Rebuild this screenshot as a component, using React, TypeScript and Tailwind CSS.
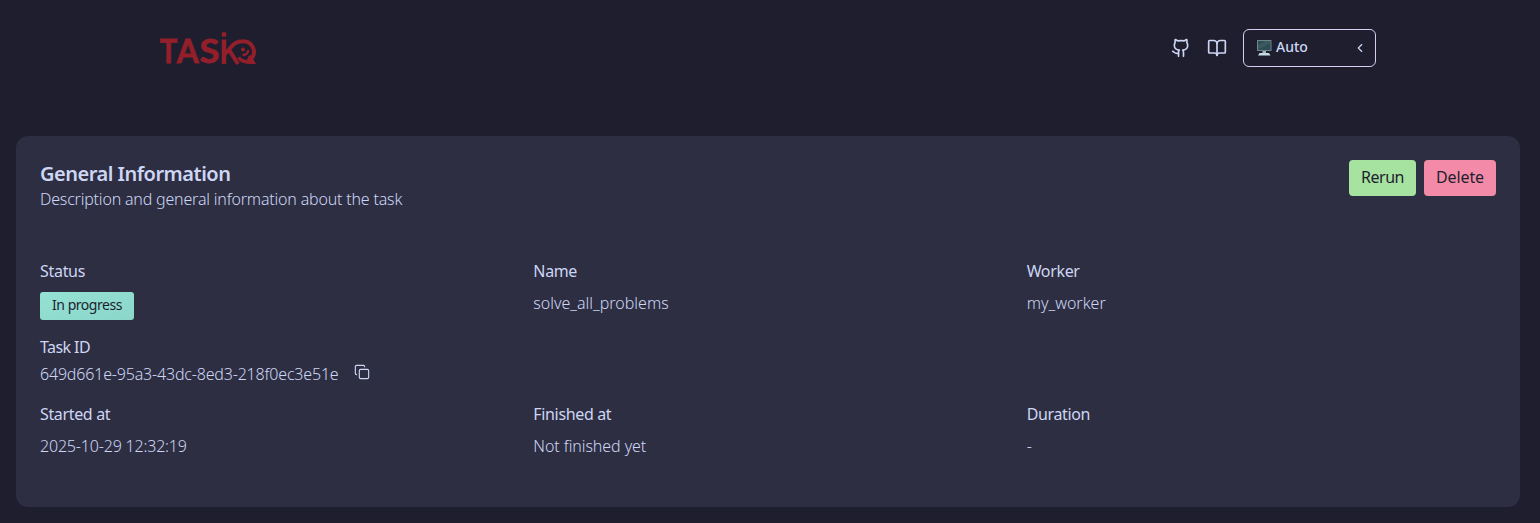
import { BookOpen, ChevronLeft, Copy, Github } from "lucide-react";
import type { ReactNode } from "react";

function Logo() {
  return (
    <svg width="98" height="56" viewBox="0 -10 98 56" className="block" fill="none" stroke="#931f2b">
      <g fill="#931f2b" stroke="#931f2b" strokeWidth="0.8" fontFamily="Lato, sans-serif" fontWeight="700" fontSize="33">
        <text x="0.8" y="33.300" textLength="17.500" lengthAdjust="spacingAndGlyphs">T</text>
        <text x="17.800" y="33.300" textLength="22" lengthAdjust="spacingAndGlyphs">A</text>
        <text x="40.500" y="33.300" textLength="20" lengthAdjust="spacingAndGlyphs">S</text>
      </g>
      <rect x="62.800" y="2.300" width="4.400" height="4.400" fill="#931f2b" stroke="none" />
      <path d="M65 9.500V34" strokeWidth="4.400" />
      <path d="M66 24 74.500 14.500C77.500 11.700 81 11.200 84 11.200A10.600 10.600 0 0 1 92.500 28.500M70.500 20.500 79 34" strokeWidth="4" />
      <path d="M79.500 27.500C82.500 31.500 88 32.500 94 32.300L90 26" strokeWidth="3.400" />
      <path d="M87 30 96.800 34 92 26z" fill="#931f2b" stroke="none" />
      <circle cx="84" cy="19.500" r="1.900" fill="#931f2b" stroke="none" />
      <path d="M89 20c.5 2.500-1 5-5.500 5" strokeWidth="2.400" />
    </svg>
  );
}

function MonitorIcon() {
  return (
    <svg width="16" height="18" viewBox="0 0 16 18" className="block">
      <rect x="1" y="1" width="14.500" height="11" rx="0.6" fill="#70858c" />
      <rect x="2" y="2" width="12.500" height="9" fill="#2c4d54" />
      <path d="M2 11V6l7.500-4h5v2z" fill="#3a5a60" />
      <path d="M6.500 12h3.500v2.500H6.500z" fill="#9fb6bb" />
      <path d="M3.500 14h9.500l1.500 2.500H2z" fill="#c3dde1" />
    </svg>
  );
}

function Field({ label, children }: { label: string; children: ReactNode }) {
  return (
    <div className="flex flex-col gap-2">
      <div className="leading-6 tracking-[-0.35px]">{label}</div>
      <div className="font-light leading-6">{children}</div>
    </div>
  );
}

export default function App() {
  return (
    <div className="flex h-[523px] flex-col bg-[#1e1e2e] font-['Noto_Sans',sans-serif] text-base text-[#cdd6f4]">
      <header className="flex h-24 items-center justify-between pl-[159px] pr-[164px]">
        <Logo />
        <div className="flex items-center">
          <Github size={20} strokeWidth={2} />
          <BookOpen size={20} strokeWidth={2} className="ml-4" />
          <button className="ml-4 flex h-[38px] w-[133px] items-center rounded-md border border-[#d9ccf0] pl-3 pr-2">
            <MonitorIcon />
            <span className="-mt-0.5 ml-1 text-sm font-medium leading-5">Auto</span>
            <ChevronLeft size={14} strokeWidth={2} className="ml-auto" />
          </button>
        </div>
      </header>

      <main className="ml-4 mr-5 mt-10 h-[371px] rounded-xl bg-[#2e2e42] p-6">
        <div className="flex items-start justify-between">
          <div>
            <h1 className="text-xl font-semibold leading-7 tracking-[-0.5px]">General Information</h1>
            <p className="-mt-px font-light leading-6 tracking-[-0.19px]">
              Description and general information about the task
            </p>
          </div>
          <div className="flex gap-2">
            <button className="h-9 w-[67px] rounded bg-[#a6e3a1] pb-0.5 tracking-[-0.5px] text-[#1e1e2e]">Rerun</button>
            <button className="h-9 w-[72px] rounded bg-[#f38ba8] pb-0.5 tracking-[-0.1px] text-[#1e1e2e]">Delete</button>
          </div>
        </div>

        <div className="mt-12 grid grid-cols-3 gap-x-6">
          <div className="flex flex-col items-start">
            <div className="leading-6 tracking-[-0.3px]">Status</div>
            <span className="mt-[9px] h-7 w-[94px] rounded-[3px] bg-linear-to-br from-[#94e2d5] to-[#8cd6ca] pt-[3px] text-center text-sm leading-5 tracking-[-0.45px] text-[#1e1e2e]">
              In progress
            </span>
          </div>
          <Field label="Name">solve_all_problems</Field>
          <Field label="Worker">my_worker</Field>
        </div>

        <div className="mt-[15px]">
          <div className="leading-6 tracking-[-0.58px]">Task ID</div>
          <div className="mt-[3px] flex">
            <span className="font-light leading-6 tracking-[-0.18px]">649d661e-95a3-43dc-8ed3-218f0ec3e51e</span>
            <Copy size={16} strokeWidth={1.7} className="ml-[15px] mt-0.5" />
          </div>
        </div>

        <div className="mt-4 grid grid-cols-3 gap-x-6">
          <Field label="Started at">
            <span className="tracking-[-0.18px]">2025-10-29 12:32:19</span>
          </Field>
          <Field label="Finished at">
            <span className="tracking-[-0.07px]">Not finished yet</span>
          </Field>
          <Field label="Duration">-</Field>
        </div>
      </main>
    </div>
  );
}
